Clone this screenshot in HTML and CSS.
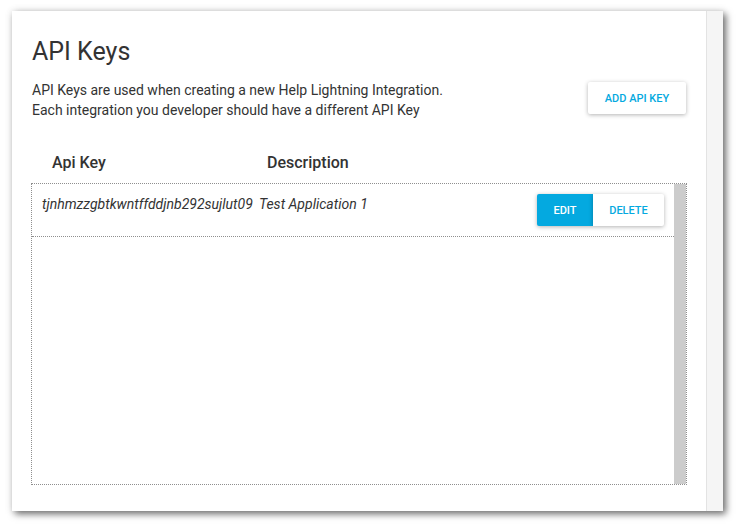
FILE: index.html
```html
<!DOCTYPE html>
<html>
<head>
<meta charset="utf-8">
<link rel="stylesheet" href="styles.css">
</head>
<body>
<div class="window">
  <div class="content">
    <h1 class="title">API Keys</h1>
    <div class="intro">
      <p class="desc">API Keys are used when creating a new Help Lightning Integration.<br>Each integration you developer should have a different API Key</p>
      <button class="btn btn-flat add-btn">ADD API KEY</button>
    </div>
    <div class="table-head">
      <span class="th th-key">Api Key</span>
      <span class="th th-desc">Description</span>
    </div>
    <div class="table-box">
      <div class="rows">
        <div class="row">
          <span class="cell cell-key">tjnhmzzgbtkwntffddjnb292sujlut09</span>
          <span class="cell cell-desc">Test Application 1</span>
          <div class="actions">
            <button class="btn btn-primary">EDIT</button>
            <button class="btn btn-flat">DELETE</button>
          </div>
        </div>
      </div>
      <div class="vscroll"></div>
    </div>
  </div>
  <div class="side-strip"></div>
</div>
</body>
</html>
```

FILE: styles.css
```css
html, body {
  margin: 0;
  padding: 0;
  background: #ffffff;
}
body {
  font-family: Roboto, "Liberation Sans", sans-serif;
  color: #333333;
  width: 745px;
  height: 530px;
  overflow: hidden;
}
.window {
  margin: 11px 0 0 12px;
  width: 711px;
  height: 500px;
  display: flex;
  background: #ffffff;
  box-shadow: 3px 3px 7px rgba(0, 0, 0, 0.55), 0 0 8px rgba(0, 0, 0, 0.10);
}
.content {
  flex: 1;
  padding: 27px 20px 0 20px;
  display: flex;
  flex-direction: column;
}
.side-strip {
  width: 16px;
  background: #f5f5f5;
  border-left: 1px solid #e3e3e3;
}
.title {
  margin: 0;
  font-size: 25px;
  font-weight: 400;
  line-height: 28px;
  color: #333333;
}
.intro {
  margin-top: 14px;
  display: flex;
  justify-content: space-between;
  align-items: flex-start;
}
.desc {
  margin: 0;
  font-size: 14px;
  line-height: 20px;
  color: #333333;
}
.btn {
  font-family: Roboto, "Liberation Sans", sans-serif;
  font-size: 11px;
  font-weight: 500;
  height: 32px;
  border: none;
  border-radius: 2px;
  padding: 0 16px;
  cursor: pointer;
}
.btn-flat {
  background: #ffffff;
  color: #04a9e0;
  box-shadow: 0 1px 4px rgba(0, 0, 0, 0.3);
}
.btn-primary {
  background: #04a9e0;
  color: #ffffff;
  box-shadow: 0 1px 4px rgba(0, 0, 0, 0.3);
}
.add-btn {
  margin-top: 2px;
  width: 98px;
  padding: 0;
}
.table-head {
  margin-top: 27px;
  margin-bottom: 6px;
  display: flex;
  height: 30px;
  align-items: center;
}
.th {
  font-size: 16px;
  font-weight: 500;
  color: #333333;
}
.th-key {
  margin-left: 20px;
  width: 215px;
}
.table-box {
  margin-left: -1px;
  margin-right: -1px;
  height: 300px;
  border: 1px dotted #8f8f8f;
  display: flex;
}
.rows {
  flex: 1;
}
.vscroll {
  width: 12px;
  background: #cccccc;
}
.row {
  display: flex;
  align-items: flex-start;
  padding: 10px;
  border-bottom: 1px dotted #8f8f8f;
}
.cell {
  font-size: 14px;
  font-style: italic;
  line-height: 20px;
  color: #333333;
}
.cell-key {
  width: 217px;
}
.cell-desc {
  flex: 1;
}
.actions {
  display: flex;
}
.actions .btn-primary {
  width: 56px;
  padding: 0;
  border-radius: 2px 0 0 2px;
}
.actions .btn-flat {
  width: 71px;
  padding: 0;
  border-radius: 0 2px 2px 0;
}
```
